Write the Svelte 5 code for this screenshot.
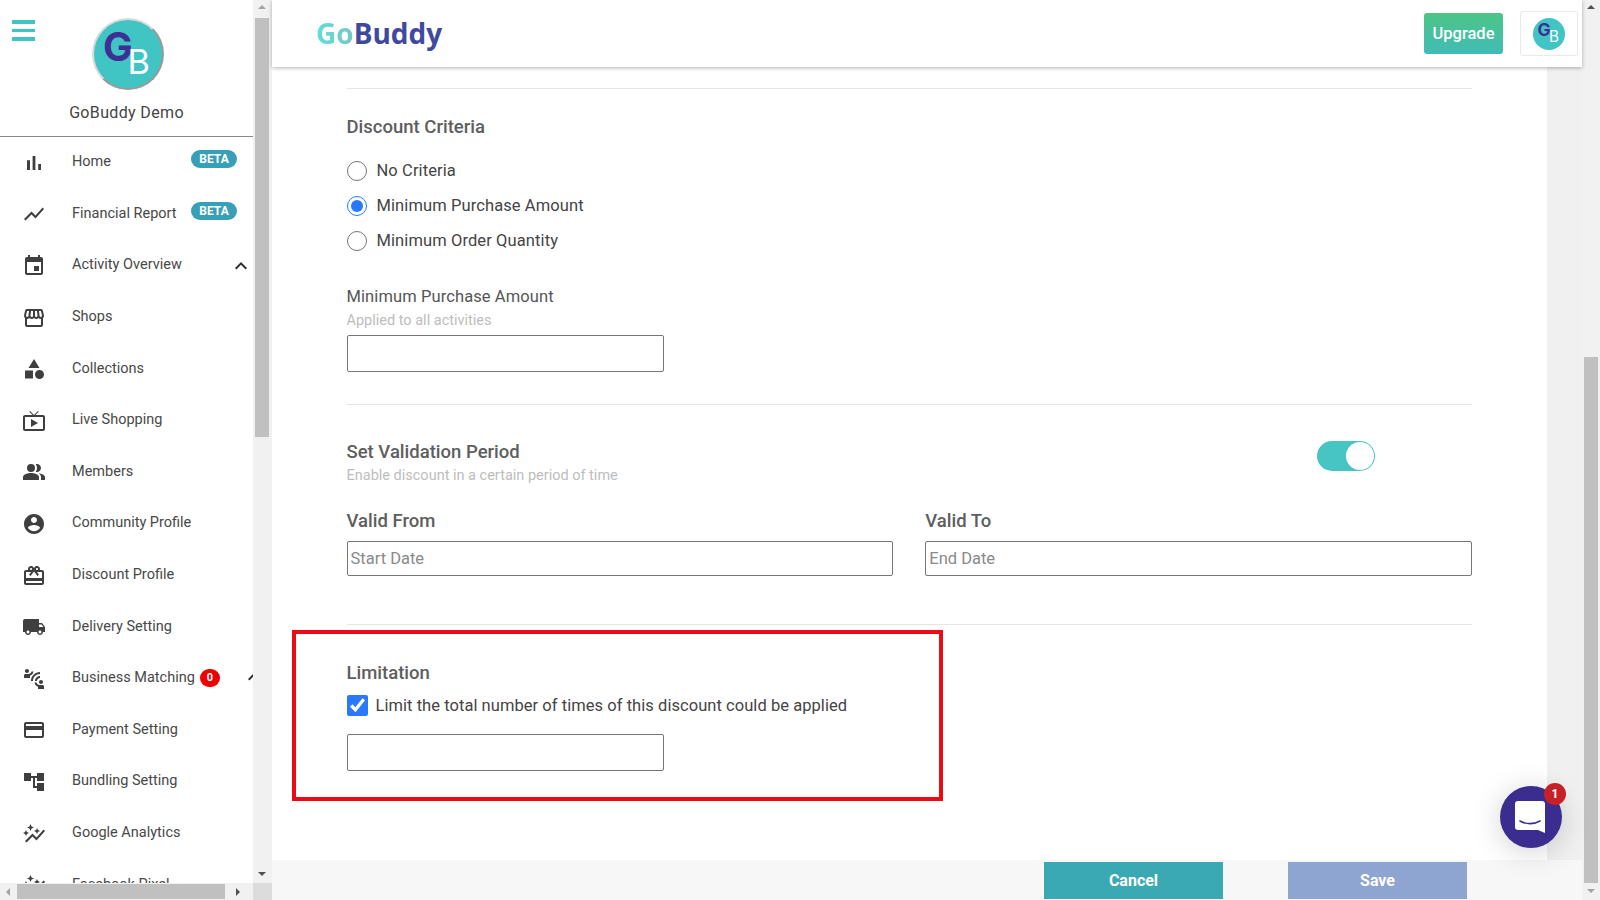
<script>
  const ICONS = {
    bar: 'M5 9.2h3V19H5zM10.6 5h2.8v14h-2.8zm5.6 8H19v6h-2.8z',
    line: 'M3.5 18.49l6-6.01 4 4L22 6.92l-1.41-1.41-7.09 7.97-4-4L2 16.99z',
    event: 'M17 12h-5v5h5v-5zM16 1v2H8V1H6v2H5c-1.11 0-1.99.9-1.99 2L3 19c0 1.1.89 2 2 2h14c1.1 0 2-.9 2-2V5c0-1.1-.9-2-2-2h-1V1h-2zm3 18H5V8h14v11z',
    store: 'M21.9 8.89l-1.05-4.37c-.22-.9-1-1.52-1.91-1.52H5.05c-.9 0-1.69.63-1.9 1.52L2.1 8.89c-.24 1.02-.02 2.06.62 2.88.08.11.19.19.28.29V19c0 1.1.9 2 2 2h14c1.1 0 2-.9 2-2v-6.94c.09-.09.2-.18.28-.28.64-.82.87-1.87.62-2.89zM18.91 4.99l1.05 4.37c.1.42.01.84-.25 1.17-.14.18-.44.47-.94.47-.61 0-1.14-.49-1.21-1.14L16.98 5l1.93-.01zM13 5h1.96l.54 4.52c.05.39-.07.78-.33 1.07-.22.26-.54.41-.95.41-.67 0-1.22-.59-1.22-1.31V5zM8.49 9.52L9.04 5H11v4.69c0 .72-.55 1.31-1.29 1.31-.34 0-.65-.15-.89-.41-.25-.29-.37-.68-.33-1.07zm-4.45-.16L5.05 5h1.97l-.58 4.86c-.08.65-.6 1.14-1.21 1.14-.49 0-.8-.29-.93-.47-.27-.32-.36-.75-.26-1.17zM5 19v-6.03c.08.01.15.03.23.03.87 0 1.66-.36 2.24-.95.6.6 1.4.95 2.31.95.87 0 1.65-.36 2.23-.93.59.57 1.39.93 2.29.93.84 0 1.64-.35 2.24-.95.58.59 1.37.95 2.24.95.08 0 .15-.02.23-.03V19H5z',
    category: 'M12 2l-5.5 9h11L12 2zM17.5 13a4.5 4.5 0 1 0 0 9 4.5 4.5 0 0 0 0-9zM3 13.5h8v8H3z',
    tv: 'M21 6h-7.59l3.29-3.29L16 2l-4 4-4-4-.71.71L10.59 6H3c-1.1 0-2 .89-2 2v12c0 1.1.9 2 2 2h18c1.1 0 2-.9 2-2V8c0-1.11-.9-2-2-2zm0 14H3V8h18v12zM9 10v8l7-4z',
    people: 'M16.67 13.13C18.04 14.06 19 15.32 19 17v3h4v-3c0-2.18-3.57-3.47-6.33-3.87zM9 4a4 4 0 1 0 0 8 4 4 0 0 0 0-8zM15 12c2.21 0 4-1.79 4-4s-1.79-4-4-4c-.47 0-.91.1-1.33.24C14.5 5.27 15 6.58 15 8s-.5 2.73-1.33 3.76c.42.14.86.24 1.33.24zM9 13c-2.67 0-8 1.34-8 4v3h16v-3c0-2.66-5.33-4-8-4z',
    account: 'M12 2C6.48 2 2 6.48 2 12s4.48 10 10 10 10-4.48 10-10S17.52 2 12 2zm0 3c1.66 0 3 1.34 3 3s-1.34 3-3 3-3-1.34-3-3 1.34-3 3-3zm0 14.2c-2.5 0-4.71-1.28-6-3.22.03-1.99 4-3.08 6-3.08 1.99 0 5.97 1.09 6 3.08-1.29 1.94-3.5 3.22-6 3.22z',
    gift: 'M20 6h-2.18c.11-.31.18-.65.18-1 0-1.66-1.34-3-3-3-1.05 0-1.96.54-2.5 1.35l-.5.67-.5-.68C10.96 2.54 10.05 2 9 2 7.34 2 6 3.34 6 5c0 .35.07.69.18 1H4c-1.11 0-1.99.89-1.99 2L2 19c0 1.11.89 2 2 2h16c1.11 0 2-.89 2-2V8c0-1.11-.89-2-2-2zm-5-2c.55 0 1 .45 1 1s-.45 1-1 1-1-.45-1-1 .45-1 1-1zM9 4c.55 0 1 .45 1 1s-.45 1-1 1-1-.45-1-1 .45-1 1-1zm11 15H4v-2h16v2zm0-5H4V8h5.08L7 10.83 8.62 12 11 8.76l1-1.36 1 1.36L15.38 12 17 10.83 14.92 8H20v6z',
    truck: 'M20 8h-3V4H3c-1.1 0-2 .9-2 2v11h2c0 1.66 1.34 3 3 3s3-1.34 3-3h6c0 1.66 1.34 3 3 3s3-1.34 3-3h2v-5l-3-4zM6 18.5c-.83 0-1.5-.67-1.5-1.5s.67-1.5 1.5-1.5 1.5.67 1.5 1.5-.67 1.5-1.5 1.5zm13.5-9l1.96 2.5H17V9.5h2.5zm-1.5 9c-.83 0-1.5-.67-1.5-1.5s.67-1.5 1.5-1.5 1.5.67 1.5 1.5-.67 1.5-1.5 1.5z',
    connect: 'M11 14H9c0-4.97 4.03-9 9-9v2c-3.87 0-7 3.13-7 7zm7-3V9c-2.76 0-5 2.24-5 5h2c0-1.66 1.34-3 3-3zM7 4c0-1.11-.89-2-2-2s-2 .89-2 2 .89 2 2 2 2-.89 2-2zm4.45.5h-2C9.21 5.92 7.99 7 6.5 7h-3C2.67 7 2 7.67 2 8.5V11h6V8.74c1.86-.59 3.25-2.23 3.45-4.24zM19 17c1.11 0 2-.89 2-2s-.89-2-2-2-2 .89-2 2 .89 2 2 2zm1.5 1h-3c-1.49 0-2.71-1.08-2.95-2.5h-2c.2 2.01 1.59 3.65 3.45 4.24V22h6v-2.5c0-.83-.67-1.5-1.5-1.5z',
    card: 'M20 4H4c-1.11 0-1.99.89-1.99 2L2 18c0 1.11.89 2 2 2h16c1.11 0 2-.89 2-2V6c0-1.11-.89-2-2-2zm0 14H4v-6h16v6zm0-10H4V6h16v2z',
    tree: 'M22 11V3h-7v3H9V3H2v8h7V8h2v10h4v3h7v-8h-7v3h-2V8h2v3z',
    graph: 'M14.06 9.94L12 9l2.06-.94L15 6l.94 2.06L18 9l-2.06.94L15 12zM4 14l.94-2.06L7 11l-2.06-.94L4 8l-.94 2.06L1 11l2.06.94zm4.5-5l1.09-2.41L12 5.5l-2.41-1.09L8.5 2 7.41 4.41 5 5.5l2.41 1.09zm-4 11.5l6-6.01 4 4L23 8.93l-1.41-1.41-7.09 7.97-4-4L3 19z',
  }

  const navItems = [
    { label: 'Home', icon: 'bar', beta: true },
    { label: 'Financial Report', icon: 'line', beta: true },
    { label: 'Activity Overview', icon: 'event', open: true },
    { label: 'Shops', icon: 'store' },
    { label: 'Collections', icon: 'category' },
    { label: 'Live Shopping', icon: 'tv' },
    { label: 'Members', icon: 'people' },
    { label: 'Community Profile', icon: 'account' },
    { label: 'Discount Profile', icon: 'gift' },
    { label: 'Delivery Setting', icon: 'truck' },
    { label: 'Business Matching', icon: 'connect', count: 0, clipped: true },
    { label: 'Payment Setting', icon: 'card' },
    { label: 'Bundling Setting', icon: 'tree' },
    { label: 'Google Analytics', icon: 'graph' },
    { label: 'Facebook Pixel', icon: 'graph' },
  ]

  const criteria = [
    { label: 'No Criteria', checked: false },
    { label: 'Minimum Purchase Amount', checked: true },
    { label: 'Minimum Order Quantity', checked: false },
  ]
</script>

{#snippet chevron()}
  <svg class="chevron" viewBox="0 0 24 24"><path d="M7.41 15.41L12 10.83l4.59 4.58L18 14l-6-6-6 6z" /></svg>
{/snippet}

<div class="app">
  <aside class="side">
    <div class="side-top">
      <div class="nav-pane">
        <button class="burger" aria-label="Menu"><span></span><span></span><span></span></button>
        <div class="profile">
          <div class="avatar big"><span class="g">G</span><span class="b">B</span></div>
          <div class="profile-name">GoBuddy Demo</div>
        </div>
        <nav>
          {#each navItems as item}
            <div class="nav-row">
              <svg class="nav-icon" viewBox="0 0 24 24"><path d={ICONS[item.icon]} /></svg>
              <span class="nav-label">{item.label}</span>
              {#if item.beta}<span class="beta">BETA</span>{/if}
              {#if item.count !== undefined}<span class="count">{item.count}</span>{/if}
              {#if item.open}<span class="open-chev">{@render chevron()}</span>{/if}
              {#if item.clipped}<span class="clip-chev">{@render chevron()}</span>{/if}
            </div>
          {/each}
        </nav>
      </div>
      <div class="vbar">
        <i class="arrow up"></i>
        <div class="thumb nav-thumb"></div>
        <i class="arrow down"></i>
      </div>
    </div>
    <div class="side-bottom">
      <div class="hbar">
        <i class="arrow left"></i>
        <div class="hthumb"></div>
        <i class="arrow right"></i>
      </div>
      <div class="corner"></div>
    </div>
  </aside>

  <div class="main">
    <header>
      <div class="logo"><span class="go">Go</span><span class="buddy">Buddy</span></div>
      <div class="head-actions">
        <button class="upgrade">Upgrade</button>
        <button class="user-btn"><div class="avatar small"><span class="g">G</span><span class="b">B</span></div></button>
      </div>
    </header>

    <div class="body">
      <div class="form">
        <section class="criteria">
          <h3>Discount Criteria</h3>
          <div class="radios">
            {#each criteria as c}
              <label class="radio"><input type="radio" name="criteria" checked={c.checked} />{c.label}</label>
            {/each}
          </div>
          <div class="field-title">Minimum Purchase Amount</div>
          <div class="hint">Applied to all activities</div>
          <input class="text short" type="text" />
        </section>

        <section class="period">
          <div class="period-head">
            <div>
              <h3>Set Validation Period</h3>
              <div class="hint">Enable discount in a certain period of time</div>
            </div>
            <div class="toggle"></div>
          </div>
          <div class="dates">
            <div class="date">
              <h3>Valid From</h3>
              <input class="text" type="text" placeholder="Start Date" />
            </div>
            <div class="date">
              <h3>Valid To</h3>
              <input class="text" type="text" placeholder="End Date" />
            </div>
          </div>
        </section>

        <section class="limit">
          <h3>Limitation</h3>
          <label class="check"><input type="checkbox" checked />Limit the total number of times of this discount could be applied</label>
          <input class="text short" type="text" />
          <div class="redbox"></div>
        </section>
      </div>
      <div class="gutter"></div>
    </div>

    <footer>
      <button class="foot-btn cancel">Cancel</button>
      <button class="foot-btn save">Save</button>
    </footer>

    <div class="chat">
      <svg viewBox="0 0 32 32" width="32" height="32">
        <path fill="#fff" d="M3 0h24a3 3 0 0 1 3 3v29l-7-3H3a3 3 0 0 1-3-3V3a3 3 0 0 1 3-3z" />
        <path fill="none" stroke="#3a2d8f" stroke-width="1.6" stroke-linecap="round" d="M5 20c6 3.5 14 3.5 20 0" />
      </svg>
      <span class="chat-count">1</span>
    </div>
  </div>

  <div class="page-bar">
    <i class="arrow up dark"></i>
    <div class="thumb page-thumb"></div>
    <i class="arrow down light"></i>
  </div>
</div>

<style>
  :global(body) {
    margin: 0;
    background: #fff;
  }

  .app {
    display: flex;
    width: 1600px;
    height: 900px;
    overflow: hidden;
    font-family: Roboto, 'Liberation Sans', sans-serif;
    color: #444;
  }

  button {
    font-family: inherit;
    cursor: pointer;
  }

  /* ── Sidebar ──────────────────────────────── */
  .side {
    width: 272px;
    flex-shrink: 0;
    display: flex;
    flex-direction: column;
    height: 900px;
  }

  .side-top {
    display: flex;
    height: 883px;
  }

  .nav-pane {
    position: relative;
    width: 253px;
    overflow: hidden;
  }

  .burger {
    position: absolute;
    left: 12px;
    top: 20px;
    width: 23px;
    padding: 0;
    border: 0;
    background: none;
    display: flex;
    flex-direction: column;
    gap: 5px;
  }

  .burger span {
    height: 3.5px;
    background: #40c4c4;
  }

  .profile {
    height: 137px;
    box-sizing: border-box;
    padding-top: 18px;
    border-bottom: 1px solid #8a8a8a;
    display: flex;
    flex-direction: column;
    align-items: center;
  }

  .profile-name {
    margin-top: 13px;
    font-size: 16px;
    letter-spacing: 0.35px;
    color: #444;
  }

  .avatar {
    position: relative;
    border-radius: 50%;
    background: #40c4c4;
    flex-shrink: 0;
    box-sizing: border-box;
    font-family: Inter, Roboto, sans-serif;
  }

  .avatar.big {
    width: 72px;
    height: 72px;
    margin-left: 2px;
    border: 2px solid #d5dcdc;
    border-right-color: #9a9a9a;
    border-bottom-color: #9a9a9a;
    font-size: 36px;
  }

  .avatar.small {
    width: 32px;
    height: 32px;
    font-size: 16px;
  }

  .avatar .g {
    position: absolute;
    left: 14%;
    top: 12%;
    font-size: 1.1em;
    line-height: 1;
    font-weight: 700;
    color: #3d2f94;
  }

  .avatar .b {
    position: absolute;
    left: 50%;
    top: 37%;
    font-size: 0.95em;
    line-height: 1;
    font-weight: 400;
    color: #fff;
  }

  nav {
    margin-top: -1px;
  }

  .nav-row {
    display: flex;
    align-items: center;
    height: 51.6px;
    width: 270px;
    padding-left: 22px;
    box-sizing: border-box;
    white-space: nowrap;
    position: relative;
  }

  .nav-icon {
    width: 24px;
    height: 24px;
    fill: #3f3f3f;
    flex-shrink: 0;
    margin-right: 26px;
    position: relative;
    top: 1px;
  }

  .nav-label {
    font-size: 14.5px;
    color: #484848;
  }

  .beta {
    position: absolute;
    left: 191px;
    top: 14px;
    width: 46px;
    height: 18px;
    border-radius: 9px;
    background: #389fb8;
    color: #fff;
    font-size: 12px;
    font-weight: 700;
    line-height: 18px;
    text-align: center;
  }

  .count {
    margin-left: 5px;
    width: 20px;
    height: 18px;
    border-radius: 9px;
    background: #ee0000;
    color: #fff;
    font-size: 11px;
    font-weight: 700;
    line-height: 18px;
    text-align: center;
  }

  .chevron {
    width: 24px;
    height: 24px;
    fill: #2d2d2d;
    display: block;
  }

  .open-chev,
  .clip-chev {
    position: absolute;
    top: 15px;
    left: 229px;
  }

  .clip-chev {
    left: 242px;
    top: 13px;
  }

  .vbar {
    width: 19px;
    background: #f1f1f1;
    position: relative;
    padding: 18px 0 0 2px;
    box-sizing: border-box;
  }

  .thumb {
    width: 14px;
    background: #c0c0c0;
  }

  .nav-thumb {
    height: 419px;
  }

  .arrow {
    position: absolute;
    width: 0;
    height: 0;
    border: 4px solid transparent;
  }

  .arrow.up {
    top: 5px;
    left: 5px;
    border-top: 0;
    border-bottom-color: #a3a3a3;
  }

  .arrow.down {
    bottom: 7px;
    left: 5px;
    border-bottom: 0;
    border-top-color: #505050;
  }

  .side-bottom {
    display: flex;
    height: 17px;
  }

  .hbar {
    width: 253px;
    background: #f1f1f1;
    position: relative;
    padding: 1px 0 1px 17px;
    box-sizing: border-box;
  }

  .hthumb {
    width: 208px;
    height: 15px;
    background: #c0c0c0;
  }

  .arrow.left {
    left: 6px;
    top: 5px;
    border-left: 0;
    border-right-color: #a3a3a3;
  }

  .arrow.right {
    right: 13px;
    top: 5px;
    border-right: 0;
    border-left-color: #505050;
  }

  .corner {
    width: 19px;
    background: #dcdcdc;
  }

  /* ── Main column ──────────────────────────── */
  .main {
    position: relative;
    flex: 1;
    min-width: 0;
    display: flex;
    flex-direction: column;
  }

  header {
    height: 67px;
    flex-shrink: 0;
    display: flex;
    align-items: center;
    justify-content: space-between;
    padding: 0 4px 0 44px;
    box-sizing: border-box;
    background: #fff;
    box-shadow: 0 1px 4px rgba(0, 0, 0, 0.3);
    position: relative;
    z-index: 2;
  }

  .logo {
    margin-bottom: 2px;
    font-family: 'Open Sans', 'Noto Sans', sans-serif;
    font-weight: 700;
    font-size: 28px;
  }

  .go {
    background: linear-gradient(90deg, #5fe0d8, #78c4c8);
    -webkit-background-clip: text;
    background-clip: text;
    color: transparent;
  }

  .buddy {
    color: #3f4a9e;
  }

  .head-actions {
    display: flex;
    align-items: center;
    gap: 17px;
  }

  .upgrade {
    width: 79px;
    height: 41px;
    border: 0;
    border-radius: 3px;
    background: linear-gradient(180deg, #4cc586, #41bcb6);
    color: #fff;
    font-size: 16.5px;
    font-weight: 500;
    padding: 0;
  }

  .user-btn {
    width: 58px;
    height: 45px;
    border: 1px solid #eaeaea;
    border-radius: 3px;
    background: #fff;
    display: flex;
    align-items: center;
    justify-content: center;
    padding: 0;
  }

  .body {
    flex: 1;
    min-height: 0;
    display: flex;
  }

  .form {
    flex: 1;
    padding: 21px 75px 0 74.5px;
    background: #fff;
  }

  .gutter {
    width: 35px;
    background: #f0f0f0;
  }

  section {
    position: relative;
    border-top: 1px solid #e6e6e6;
  }

  h3 {
    margin: 0;
    font-size: 18.5px;
    line-height: 22px;
    font-weight: 500;
    color: #5e5e5e;
  }

  .criteria {
    height: 316px;
    padding-top: 27px;
    box-sizing: border-box;
  }

  .radios {
    margin-top: 22px;
    display: flex;
    flex-direction: column;
    gap: 14.2px;
  }

  .radio {
    display: flex;
    align-items: center;
    gap: 10px;
    height: 21px;
    font-size: 16.5px;
    color: #444;
    letter-spacing: 0.1px;
  }

  .radio input {
    width: 20px;
    height: 20px;
    margin: 0;
    accent-color: #2979ff;
  }

  .field-title {
    margin-top: 35px;
    font-size: 16.5px;
    line-height: 22px;
    color: #555;
    letter-spacing: 0.1px;
  }

  .hint {
    margin-top: 3px;
    font-size: 14.5px;
    line-height: 20px;
    color: #bdbdbd;
  }

  .text {
    display: block;
    width: 100%;
    height: 35px;
    box-sizing: border-box;
    border: 1px solid #767676;
    border-radius: 2px;
    padding: 0 3px;
    margin: 0;
    font-family: inherit;
    font-size: 16.5px;
    background: #fff;
  }

  .text::placeholder {
    color: #8a8a8a;
  }

  .text.short {
    width: 317px;
    height: 37px;
    margin-top: 4px;
  }

  .period {
    height: 220px;
    padding-top: 36px;
    box-sizing: border-box;
  }

  .period-head {
    display: flex;
    justify-content: space-between;
    align-items: flex-start;
  }

  .toggle {
    position: relative;
    width: 58px;
    height: 30px;
    border-radius: 15px;
    background: #47c4c4;
    margin: 0 97px 0 0;
  }

  .toggle::after {
    content: '';
    position: absolute;
    right: 1px;
    top: 1px;
    width: 28px;
    height: 28px;
    border-radius: 50%;
    background: #fff;
  }

  .dates {
    display: flex;
    gap: 32px;
    margin-top: 24px;
  }

  .date {
    flex: 1;
  }

  .date .text {
    margin-top: 9px;
  }

  .limit {
    padding-top: 37px;
  }

  .check {
    display: flex;
    align-items: center;
    gap: 8px;
    margin-top: 11px;
    font-size: 16.5px;
    color: #444;
    letter-spacing: 0.05px;
  }

  .check input {
    width: 21px;
    height: 21px;
    margin: 0;
    accent-color: #2979ff;
  }

  .limit .text.short {
    margin-top: 18px;
  }

  .redbox {
    position: absolute;
    left: -55px;
    top: 5px;
    width: 651px;
    height: 171px;
    box-sizing: border-box;
    border: 4px solid #ee0a14;
    pointer-events: none;
  }

  footer {
    height: 40px;
    flex-shrink: 0;
    box-sizing: border-box;
    padding: 2px 115px 1px 772px;
    display: flex;
    gap: 65px;
    background: #f7f7f7;
  }

  .foot-btn {
    width: 179px;
    border: 0;
    padding: 0;
    color: #fff;
    font-size: 16px;
    font-weight: 700;
  }

  .cancel {
    background: #3ba9b3;
  }

  .save {
    background: #8fa5d1;
  }

  .chat {
    position: absolute;
    left: 1228px;
    top: 786px;
    width: 62px;
    height: 62px;
    border-radius: 50%;
    background: #3a2d8f;
    box-shadow: 0 4px 30px rgba(0, 0, 0, 0.18);
    z-index: 3;
    display: flex;
    align-items: center;
    justify-content: center;
  }

  .chat-count {
    position: absolute;
    left: 44px;
    top: -3px;
    width: 22px;
    height: 22px;
    border-radius: 50%;
    background: #c62127;
    color: #fff;
    font-size: 12px;
    font-weight: 700;
    line-height: 22px;
    text-align: center;
  }

  .page-bar {
    position: relative;
    width: 18px;
    flex-shrink: 0;
    background: #f1f1f1;
    box-sizing: border-box;
    padding-top: 357px;
    display: flex;
    justify-content: center;
    align-items: flex-start;
  }

  .page-thumb {
    height: 526px;
  }

  .arrow.dark {
    border-bottom-color: #505050;
  }

  .arrow.light {
    border-top-color: #a3a3a3;
  }
</style>
